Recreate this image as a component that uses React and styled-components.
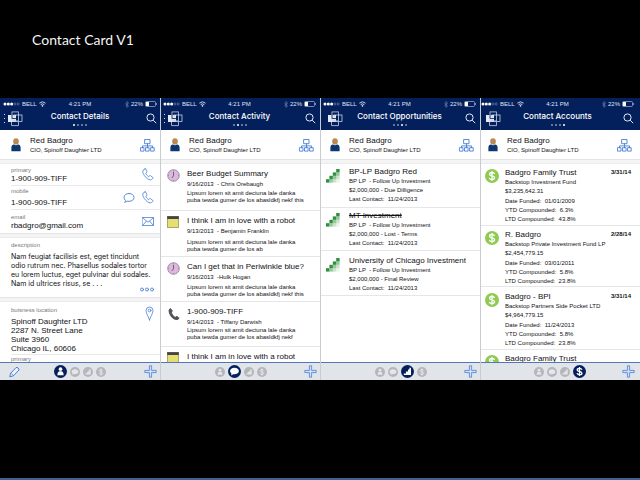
import React from "react";
import styled, { createGlobalStyle } from "styled-components";

const navy = "#04205c";
const blue = "#4a7fd6";

const GlobalStyle = createGlobalStyle`
  *, *::before, *::after { box-sizing: border-box; }
  body { margin: 0; background: #000; font-family: "Liberation Sans", Arial, sans-serif; color: #111114; }
  h1, h2, h3, p, address, ul { margin: 0; padding: 0; font-weight: 400; font-style: normal; }
  button { margin: 0; padding: 0; border: 0; background: none; font: inherit; color: inherit; display: grid; place-items: center; cursor: pointer; }
  svg { display: block; }
`;

const Slide = styled.main`
  display: flex;
  flex-direction: column;
  min-height: 100vh;
  background: #000;
  border-bottom: 2px solid #3f5f8c;
`;
const SlideTitle = styled.h1`
  padding: 30px 32px 48px;
  font: 400 14px/20px Lato, "Open Sans", sans-serif;
  color: #f4f4f4;
`;
const Screens = styled.div`
  display: grid;
  grid-template-columns: repeat(4, minmax(0, 1fr));
`;
const Screen = styled.section`
  display: flex;
  flex-direction: column;
  min-width: 0;
  min-height: 0;
  aspect-ratio: 160 / 282;
  overflow: hidden;
  background: #fff;
  & + & { border-left: 1px solid #c9ccd1; }
`;

/* ---- top bar ---- */
const TopBar = styled.header`
  flex: none;
  height: 32px;
  padding: 1px ${(p) => p.$end}px 0 ${(p) => p.$start}px;
  background: ${navy};
  color: #fff;
`;
const StatusBar = styled.div`
  display: grid;
  grid-template-columns: 1fr auto 1fr;
  align-items: center;
  font-size: 6px;
  line-height: 10px;
  color: #dfe5f2;
`;
const StatusGroup = styled.div`
  display: flex;
  align-items: center;
  gap: 2px;
  justify-content: ${(p) => (p.$right ? "flex-end" : "flex-start")};
`;
const NavBar = styled.div`
  display: grid;
  grid-template-columns: 20px 1fr 20px;
  align-items: center;
  height: 19px;
`;
const TitleBlock = styled.div`
  display: flex;
  flex-direction: column;
  align-items: center;
  gap: 2px;
`;
const ScreenTitle = styled.h2`
  font: 500 8px/11px Inter, "Liberation Sans", sans-serif;
  white-space: nowrap;
`;
const Pager = styled.div`
  display: flex;
  gap: 2px;
`;
const PagerDot = styled.i`
  width: 2px;
  height: 2px;
  border-radius: 1px;
  background: ${(p) => (p.$on ? "#fff" : "#8292b8")};
`;
const SearchButton = styled.button`
  justify-self: end;
  width: 12px;
  height: 12px;
`;

/* ---- person ---- */
const Person = styled.div`
  flex: none;
  display: grid;
  grid-template-columns: ${(p) => p.$indent}px 1fr 16px;
  align-items: center;
  height: 29px;
  padding: 2px ${(p) => p.$end}px 0 0;
`;
const Avatar = styled.div`
  justify-self: end;
  width: 10px;
  margin: 0 9px 2px 0;
`;
const PersonName = styled.h3`
  font-size: 8px;
  line-height: 10px;
`;
const PersonRole = styled.p`
  font-size: 6px;
  line-height: 9px;
`;
const Strip = styled.div`
  flex: none;
  height: 5px;
  background: #f4f4f5;
  border-top: 1px solid #e4e4e6;
  border-bottom: 1px solid #ececee;
`;
const Body = styled.div`
  flex: 1;
  min-height: 0;
  overflow: hidden;
`;

/* ---- detail screen ---- */
const Field = styled.div`
  display: flex;
  align-items: center;
  gap: 7px;
  height: ${(p) => p.$h}px;
  margin-left: 11px;
  padding-right: 6px;
  border-bottom: ${(p) => (p.$last ? 0 : 1)}px solid #e9e9eb;
`;
const FieldText = styled.div`
  flex: 1;
  min-width: 0;
`;
const Label = styled.p`
  font-size: 6px;
  line-height: 8px;
  color: #77777c;
`;
const Value = styled.p`
  margin-top: ${(p) => p.$gap || 0}px;
  font-size: 8px;
  line-height: 10px;
`;
const Block = styled.div`
  display: grid;
  grid-template-columns: 1fr auto;
  padding: ${(p) => p.$top}px 6px ${(p) => p.$bottom}px 11px;
`;
const Paragraph = styled.p`
  grid-column: 1 / -1;
  margin-top: 3px;
  font: 400 7px/9px Inter, "Liberation Sans", sans-serif;
  white-space: nowrap;
`;
const More = styled.button`
  grid-column: 2;
  margin-top: -1px;
`;
const Address = styled.address`
  font-size: 8px;
  line-height: 9px;
  margin-top: 3px;
  white-space: nowrap;
`;
const NextLabel = styled(Label)`
  margin-left: 11px;
  border-top: 1px solid #e9e9eb;
`;

/* ---- list screens ---- */
const List = styled.ul`
  list-style: none;
`;
const Item = styled.li`
  display: grid;
  grid-template-columns: ${(p) => p.$indent}px minmax(0, 1fr);
  height: ${(p) => p.$h}px;
  padding-top: ${(p) => p.$top}px;
  border-bottom: 1px solid #e6e6e8;
`;
const ItemIcon = styled.div`
  padding: ${(p) => p.$y}px 0 0 ${(p) => p.$x}px;
`;
const ItemHead = styled.div`
  display: flex;
  justify-content: space-between;
  padding-right: 9px;
`;
const ItemTitle = styled.h3`
  font-size: 8px;
  line-height: 11px;
  white-space: nowrap;
  text-decoration: ${(p) => (p.$done ? "line-through" : "none")};
`;
const ItemDate = styled.time`
  font-size: 6px;
  font-weight: 700;
  line-height: 10px;
`;
const Line = styled.p`
  font-size: 6px;
  line-height: ${(p) => p.$lh || 9}px;
  margin-top: ${(p) => p.$gap || 0}px;
  white-space: pre;
`;

/* ---- bottom bar ---- */
const BottomBar = styled.footer`
  flex: none;
  display: grid;
  grid-template-columns: 20px 1fr 20px;
  align-items: center;
  height: 18px;
  padding-right: ${(p) => p.$shift}px;
  background: #e1e4e8;
  border-top: 1px solid #4f79b4;
`;
const EditButton = styled.button`
  justify-self: end;
`;
const Tabs = styled.nav`
  display: flex;
  align-items: center;
  justify-content: center;
  gap: 3px;
`;
const Tab = styled.button`
  width: ${(p) => (p.$on ? 13 : 10)}px;
  height: ${(p) => (p.$on ? 13 : 10)}px;
  border-radius: 50%;
  background: ${(p) => (p.$on ? navy : "#b4b6ba")};
  color: ${(p) => (p.$on ? "#fff" : "#e4e6e9")};
`;

/* ---- drawings ---- */
const line = { fill: "none", stroke: blue, strokeWidth: 1, strokeLinejoin: "round", strokeLinecap: "round" };
const phonePath =
  "M3 .8 1.2 2C.4 3 .6 5 2.4 7.6s4.200 4.200 6 4.200c1 0 1.800-.6 2.600-1.600.2-.3 0-.6-.2-.8L8.500 7.700c-.3-.2-.6-.2-.8 0l-1 .9C5.400 8 4.200 6.500 3.800 5.300l1-.8c.3-.2.3-.5.1-.8L3.700 1C3.500.7 3.300.6 3 .8Z";

const Phone = () => (
  <svg width="12" height="13" viewBox="0 0 12 13"><path d={phonePath} {...line} strokeWidth=".8" /></svg>
);
const Bubble = () => (
  <svg width="12" height="12" viewBox="0 0 12 12"><path d="M6 1.500c3 0 5 1.600 5 3.900S9 9.300 6 9.300c-.7 0-1.300 0-1.900-.2-.7.7-1.500 1.100-2.500 1.200.6-.6.8-1.200.8-2C1.500 7.600 1 6.600 1 5.400c0-2.300 2-3.900 5-3.900Z" {...line} strokeWidth=".9" /></svg>
);
const Mail = () => (
  <svg width="12" height="9" viewBox="0 0 12 9"><path d="M.5.5h11v8H.5ZM.5.800 6 5.200 11.500.8M.8 8.200l3.500-4M11.200 8.200l-3.500-4" {...line} strokeWidth=".8" /></svg>
);
const Pin = () => (
  <svg width="9" height="15" viewBox="0 0 9 15"><path d="M4.500 14C4 11.500 1 7.500 1 4.500a3.500 3.500 0 0 1 7 0c0 3-3 7-3.500 9.500Z" {...line} strokeWidth=".8" /><circle cx="4.500" cy="4.500" r="1.400" {...line} strokeWidth=".8" /></svg>
);
const Dots3 = () => (
  <svg width="14" height="5" viewBox="0 0 14 5">{[2, 7, 12].map((x) => <circle key={x} cx={x} cy="2.500" r="1.500" {...line} strokeWidth=".9" />)}</svg>
);
const Org = () => (
  <svg width="15" height="13" viewBox="0 0 15 13"><path d="M5 .5h5v4.200H5ZM7.500 4.700v4M2.500 8.700V6.900h10v1.800M.8 8.700h3.200v3.400H.8ZM5.900 8.700h3.200v3.400H5.900ZM11 8.700h3.200v3.400H11Z" {...line} strokeWidth=".9" /></svg>
);
const PersonIcon = () => (
  <svg width="10" height="14" viewBox="0 0 10 14"><ellipse cx="5" cy="3.400" rx="2.800" ry="3.200" fill="#b98a55" /><path d="M.4 13.200V9.600C.4 7.700 1.500 6.700 3 6.600c1.200.8 2.800.8 4 0 1.500.1 2.600 1.100 2.600 3v3.600Z" fill="#0c3670" /></svg>
);
const Search = () => (
  <svg width="11" height="11" viewBox="0 0 11 11"><circle cx="4.500" cy="4.500" r="3.600" fill="none" stroke="#e3e9f5" /><path d="m7.200 7.200 3 3" stroke="#e3e9f5" /></svg>
);
const Logo = ({ menu }) => (
  <svg width="20" height="16" viewBox="0 0 20 16">
    {menu && <path d="M1 3h1v1H1ZM1 7h1v1H1ZM1 11h1v1H1Z" fill="#d5dcec" />}
    <rect x="5" y="4" width="8" height="7" fill="#e6ebf5" />
    <rect x="9" y=".9" width="6.500" height="9" fill="none" stroke="#c6d0e6" strokeWidth=".8" />
    <rect x="11" y="4" width="8" height="6.500" fill="none" stroke="#c6d0e6" strokeWidth=".8" />
    <path d="M8.500 11v3.600h7v-4" fill="none" stroke="#c6d0e6" strokeWidth=".8" />
    <path d="M9 4v3.500h4" fill="none" stroke={navy} strokeWidth=".8" />
  </svg>
);
const Signal = () => (
  <svg width="17" height="4" viewBox="0 0 17 4">
    {[0, 1, 2, 3, 4].map((i) => <circle key={i} cx={2 + i * 3.300} cy="2" r={i < 3 ? 1.500 : 1.100} fill={i < 3 ? "#fff" : "none"} stroke={i < 3 ? "none" : "#8fa0c6"} strokeWidth=".5" />)}
  </svg>
);
const Wifi = () => (
  <svg width="7" height="6" viewBox="0 0 7 6"><path d="M.4 2.200Q3.500-.6 6.600 2.200M1.700 3.600q1.800-1.500 3.600 0" fill="none" stroke="#dfe5f2" strokeWidth=".9" /><circle cx="3.500" cy="4.900" r=".8" fill="#dfe5f2" /></svg>
);
const Bluetooth = () => (
  <svg width="4" height="7" viewBox="0 0 4 7"><path d="m.5 2 3 3L2 6.500v-6L3.500 2l-3 3" fill="none" stroke="#7f8fb5" strokeWidth=".6" /></svg>
);
const Battery = () => (
  <svg width="12" height="6" viewBox="0 0 12 6"><rect x=".5" y=".5" width="10" height="5" rx="1" fill="none" stroke="#aab6d2" strokeWidth=".7" /><path d="M1 1h3v4H1Z" fill="#fff" /><path d="M11.500 2v2" stroke="#aab6d2" strokeWidth=".7" /></svg>
);
const Pencil = () => (
  <svg width="11" height="12" viewBox="0 0 11 12"><path d="M.8 10.800 1.600 7.300 7 1.600c1-.9 3.700 1.200 2.900 2.500L4.300 9.900Z" fill="#eaf1fc" stroke={blue} strokeLinejoin="round" /><path d="M1.600 7.300c1.100.2 2.400 1.400 2.700 2.600" fill="none" stroke={blue} strokeWidth=".7" /></svg>
);
const Plus = () => (
  <svg width="13" height="13" viewBox="0 0 13 13"><path d="M5.400.8h2.200v4.600h4.600v2.200H7.600v4.600H5.400V7.600H.8V5.400h4.600Z" fill="#cfe0f8" stroke={blue} strokeWidth=".8" /></svg>
);
const Clock = () => (
  <svg width="13" height="13" viewBox="0 0 13 13"><circle cx="6.500" cy="6.500" r="5.800" fill="#dcb9dc" stroke="#8c7b91" strokeWidth=".8" /><path d="M6.500 2.800v4L4.800 9" fill="none" stroke="#67536d" strokeWidth=".9" /><path d="M6.500 1v1M6.500 11v1M1 6.500h1M11 6.500h1" stroke="#8c7b91" strokeWidth=".6" /></svg>
);
const Note = () => (
  <svg width="12" height="12" viewBox="0 0 12 12"><rect x=".5" y=".5" width="11" height="11" fill="#e5df72" stroke="#999553" strokeWidth=".8" /><path d="M.2.2h11.600V3H.2Z" fill="#444448" /></svg>
);
const Handset = () => (
  <svg width="14" height="14" viewBox="0 0 12 14"><path d="M2.600 1 1 2.300C0 4 .8 6.600 2.600 9.200s4.200 4 6 3.800c1 0 2.400-1 2.900-2.100L8.900 8.800 7.200 10C5.800 9.200 4.200 7 3.700 5.300L4.900 4Z" fill="#555559" /></svg>
);
const Stairs = () => (
  <svg width="14" height="14" viewBox="0 0 14 14">
    {[0, 1, 2, 3].map((c) =>
      Array.from({ length: c + 1 }, (_, r) => (
        <rect key={c + "-" + r} x={c * 3.400} y={10.200 - (c - r) * 3.400} width="3.400" height="3.400" fill="#2f8f3e" opacity={[1, 0.5, 0.25, 0.1][r]} />
      ))
    )}
  </svg>
);
const Dollar = () => (
  <svg width="14" height="14" viewBox="0 0 14 14"><circle cx="7" cy="7" r="7" fill="#8fcb52" /><path d="M9.600 4.900C9.200 3.900 8.200 3.500 7 3.500c-1.500 0-2.500.7-2.500 1.700C4.500 7.500 9.600 6.300 9.600 8.800c0 1-1 1.800-2.600 1.800-1.400 0-2.400-.6-2.700-1.700M7 2v10" fill="none" stroke="#fff" strokeWidth="1.300" /></svg>
);
const glyphs = [
  ["Details", <><circle cx="5" cy="3.200" r="1.400" fill="currentColor" /><path d="M2.600 7.800c0-2 .8-3 1.800-3h1.200c1 0 1.800 1 1.800 3Z" fill="currentColor" /></>],
  ["Activity", <path d="M5 2.200c2 0 3.400 1 3.400 2.500S7 7.200 5 7.200l-1-.1L2.300 8l.4-1.500C2 6.100 1.600 5.500 1.600 4.700 1.600 3.200 3 2.200 5 2.200Z" fill="currentColor" />],
  ["Opportunities", <path d="M7.700 2.200v5.400H2.200V6.600h1.600V5h1.600V3.500h1.100V2.200Z" fill="currentColor" />],
  ["Accounts", <path d="M6.900 3.600C6.600 2.900 5.900 2.600 5 2.600c-1.100 0-1.800.5-1.800 1.200 0 1.600 3.700.8 3.700 2.500 0 .7-.8 1.200-1.900 1.200-1 0-1.700-.4-1.900-1.200M5 1.500v7" fill="none" stroke="currentColor" />],
];

function Shell({ title, page, start = 3, end = 4, indent = 28, children }) {
  return (
    <Screen aria-label={title}>
      <TopBar $start={start} $end={end}>
        <StatusBar>
          <StatusGroup><Signal />BELL<Wifi /></StatusGroup>
          <span>4:21 PM</span>
          <StatusGroup $right><Bluetooth />22%<Battery /></StatusGroup>
        </StatusBar>
        <NavBar>
          <Logo menu={page < 2} />
          <TitleBlock>
            <ScreenTitle>{title}</ScreenTitle>
            <Pager>{[0, 1, 2, 3].map((i) => <PagerDot key={i} $on={i === page} />)}</Pager>
          </TitleBlock>
          <SearchButton aria-label="Search"><Search /></SearchButton>
        </NavBar>
      </TopBar>
      <Person $indent={indent} $end={end + 2}>
        <Avatar><PersonIcon /></Avatar>
        <div>
          <PersonName>Red Badgro</PersonName>
          <PersonRole>CIO, Spinoff Daughter LTD</PersonRole>
        </div>
        <button aria-label="Organization"><Org /></button>
      </Person>
      <Strip />
      <Body>{children}</Body>
      <BottomBar $shift={page === 3 ? 2 : 0}>
        {page === 0 ? <EditButton aria-label="Edit"><Pencil /></EditButton> : <span />}
        <Tabs>
          {glyphs.map(([name, glyph], i) => (
            <Tab key={name} $on={i === page} aria-label={name}>
              <svg width={i === page ? 13 : 10} height={i === page ? 13 : 10} viewBox="0 0 10 10">{glyph}</svg>
            </Tab>
          ))}
        </Tabs>
        <button aria-label="Add"><Plus /></button>
      </BottomBar>
    </Screen>
  );
}

const lipsum = "Lipsum lorem sit amit deciuna lale danka\npuba tewda gumer de los ";
const activity = [
  { h: 47, gap: 1, icon: <Clock />, title: "Beer Budget Summary", by: "9/16/2013  - Chris Orebaugh", text: lipsum + "abasldkfj nekf this" },
  { h: 46, gap: 3, icon: <Note />, title: "I think I am in love with a robot", by: "9/13/2013  - Benjamin Franklin", text: lipsum + "ab" },
  { h: 45, gap: 2, icon: <Clock />, title: "Can I get that in Periwinkle blue?", by: "9/16/2013  -Hulk Hogan", text: lipsum + "abasldkfj nekf this" },
  { h: 45, gap: 0, icon: <Handset />, title: "1-900-909-TIFF", by: "9/14/2013  - Tiffany Darwish", text: lipsum + "abasldkfj nekf" },
  { h: 46, icon: <Note />, title: "I think I am in love with a robot" },
];
const opportunities = [
  { h: 44, top: 2, title: "BP-LP Badgro Red", stage: "$2,000,000 - Due Dilligence" },
  { h: 43, top: 2, title: "MT Investment", stage: "$2,000,000 - Lost - Terms", done: true },
  { h: 45, top: 4, title: "University of Chicago Investment", stage: "$2,000,000 - Final Review" },
];
const accounts = [
  { h: 62, top: 3, title: "Badgro Family Trust", date: "3/31/14", fund: "Backstop Investment Fund", amount: "$3,235,642.31", funded: "01/01/2009", ytd: "6.3%", ltd: "43.8%" },
  { h: 61, top: 3, title: "R. Badgro", date: "2/28/14", fund: "Backstop Private Investment Fund LP", amount: "$2,454,779.15", funded: "03/01/2011", ytd: "5.8%", ltd: "23.8%" },
  { h: 63, top: 4, title: "Badgro - BPI", date: "3/31/14", fund: "Backstop Partners Side Pocket LTD", amount: "$4,964,779.15", funded: "11/24/2013", ytd: "5.8%", ltd: "23.8%" },
  { h: 62, top: 3, title: "Badgro Family Trust" },
];

export default function App() {
  return (
    <Slide>
      <GlobalStyle />
      <SlideTitle>Contact Card V1</SlideTitle>
      <Screens>
        <Shell title="Contact Details" page={0} end={3} indent={30}>
          <Field $h={22}>
            <FieldText><Label>primary</Label><Value>1-900-909-TIFF</Value></FieldText>
            <button aria-label="Call primary"><Phone /></button>
          </Field>
          <Field $h={24}>
            <FieldText><Label>mobile</Label><Value $gap={3}>1-900-909-TIFF</Value></FieldText>
            <button aria-label="Message mobile"><Bubble /></button>
            <button aria-label="Call mobile"><Phone /></button>
          </Field>
          <Field $h={23} $last>
            <FieldText><Label>email</Label><Value>rbadgro@gmail.com</Value></FieldText>
            <button aria-label="Send email"><Mail /></button>
          </Field>
          <Strip />
          <Block $top={3} $bottom={5}>
            <Label>description</Label>
            <Paragraph>
              Nam feugiat facilisis est, eget tincidunt<br />odio rutrum nec. Phasellus sodales tortor<br />
              eu lorem luctus, eget pulvinar dui sodales.<br />Nam id ultrices risus, se . . .
            </Paragraph>
            <More aria-label="Show more"><Dots3 /></More>
          </Block>
          <Strip />
          <Block $top={4} $bottom={1}>
            <div>
              <Label>buisness location</Label>
              <Address>Spinoff Daughter LTD<br />2287 N. Street Lane<br />Suite 3960<br />Chicago IL, 60606</Address>
            </div>
            <Pin />
          </Block>
          <NextLabel>primary</NextLabel>
        </Shell>

        <Shell title="Contact Activity" page={1} start={2}>
          <List>
            {activity.map((a, i) => (
              <Item key={i} $indent={26} $h={a.h} $top={4}>
                <ItemIcon $x={6} $y={1}>{a.icon}</ItemIcon>
                <div>
                  <ItemTitle>{a.title}</ItemTitle>
                  {a.by && (
                    <>
                      <Line $lh={10}>{a.by}</Line>
                      <Line $lh={7} $gap={a.gap}>{a.text}</Line>
                    </>
                  )}
                </div>
              </Item>
            ))}
          </List>
        </Shell>

        <Shell title="Contact Opportunities" page={2} start={2}>
          <List>
            {opportunities.map((o) => (
              <Item key={o.title} $indent={28} $h={o.h} $top={o.top}>
                <ItemIcon $x={5} $y={3}><Stairs /></ItemIcon>
                <div>
                  <ItemTitle $done={o.done}>{o.title}</ItemTitle>
                  <Line>BP LP  - Follow Up Investment</Line>
                  <Line>{o.stage}</Line>
                  <Line>Last Contact:  11/24/2013</Line>
                </div>
              </Item>
            ))}
          </List>
        </Shell>

        <Shell title="Contact Accounts" page={3} start={0} end={6} indent={26}>
          <List>
            {accounts.map((a, i) => (
              <Item key={i} $indent={24} $h={a.h} $top={a.top}>
                <ItemIcon $x={4} $y={2}><Dollar /></ItemIcon>
                <div>
                  <ItemHead>
                    <ItemTitle>{a.title}</ItemTitle>
                    {a.date && <ItemDate>{a.date}</ItemDate>}
                  </ItemHead>
                  {a.fund && (
                    <>
                      <Line>{a.fund}</Line>
                      <Line>{a.amount}</Line>
                      <Line $gap={1}>Date Funded:  {a.funded}</Line>
                      <Line>YTD Compounded:  {a.ytd}</Line>
                      <Line>LTD Compounded:  {a.ltd}</Line>
                    </>
                  )}
                </div>
              </Item>
            ))}
          </List>
        </Shell>
      </Screens>
    </Slide>
  );
}
